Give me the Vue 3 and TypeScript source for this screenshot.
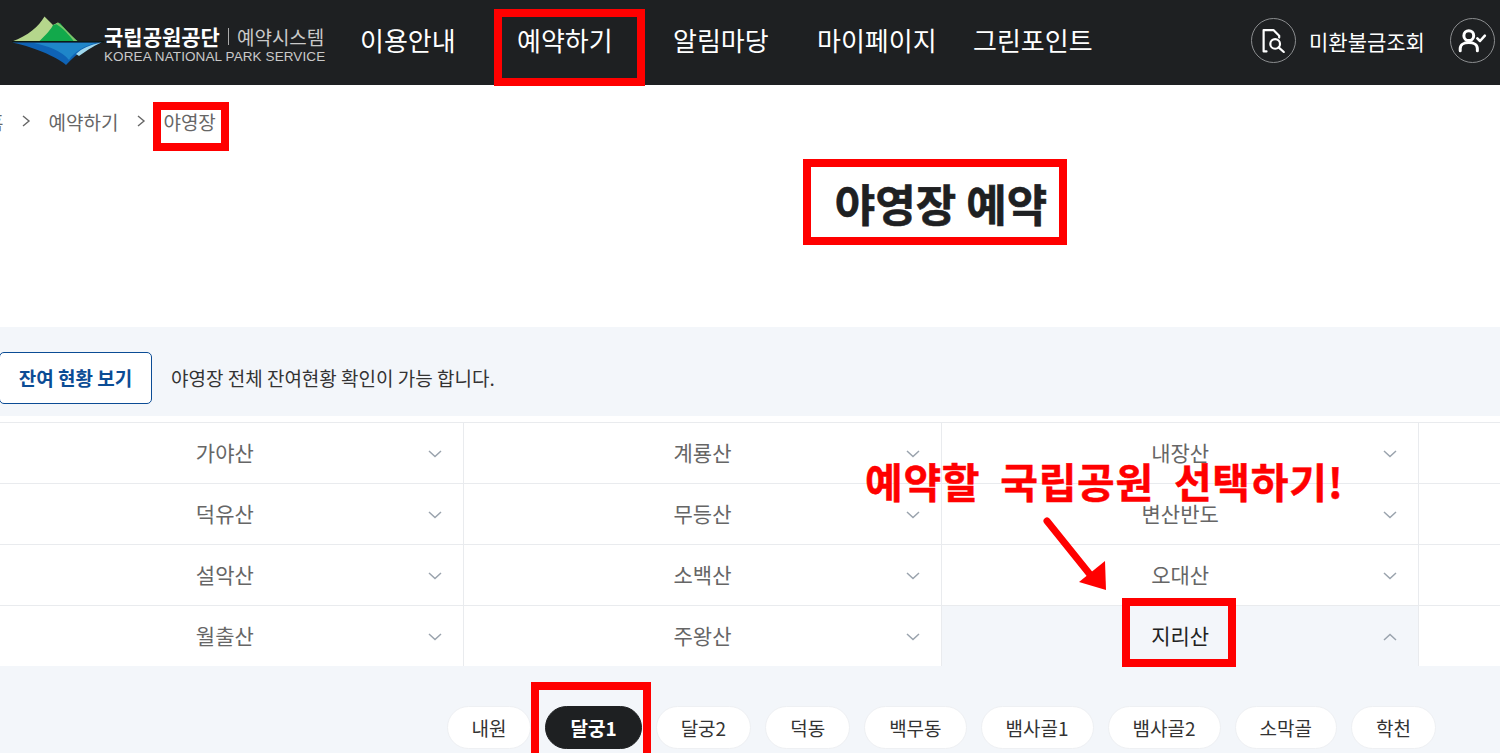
<script setup lang="ts">
const navItems: string[] = ['이용안내', '예약하기', '알림마당', '마이페이지', '그린포인트']
const parks: string[] = [
  '가야산', '계룡산', '내장산', '',
  '덕유산', '무등산', '변산반도', '',
  '설악산', '소백산', '오대산', '',
  '월출산', '주왕산', '지리산', '',
]
const camps: string[] = ['내원', '달궁1', '달궁2', '덕동', '백무동', '뱀사골1', '뱀사골2', '소막골', '학천']
</script>

<template>
  <div class="page">
    <header class="header">
      <div class="logo">
        <svg class="logo-mark" width="92" height="52" viewBox="0 0 92 52">
          <path d="M0 26.5C16 21 27 11 32.5 1.500L41 10L46 7.500C53 14 60 22 66 26.500Z" fill="#b5d68c" />
          <path d="M27 26.5C34 20 40 13 41 10L48 8C54 15 60 22 66 26.500Z" fill="#12a94b" />
          <path d="M46 7.500C54 14 60 22 66 26.500H62C57 20 51 13 44 9Z" fill="#7cc36a" />
          <rect x="0" y="26" width="92" height="1.400" fill="#0c1a16" />
          <path d="M0 27.500H90C76 31 66 37 54 50C48 44 26 33 0 27.500Z" fill="#0f63b5" />
          <path d="M22 28H84C72 31 62 37 57 45C50 36 36 31 22 28Z" fill="#1f86c9" />
          <path d="M64 39C70 33 78 30 89 27.500C80 32 74 36 67 41Z" fill="#9fd8ee" />
        </svg>
        <div class="logo-text">
          <div class="logo-top">
            <span class="logo-org">국립공원공단</span>
            <span class="logo-sep"></span>
            <span class="logo-sys">예약시스템</span>
          </div>
          <div class="logo-en">KOREA NATIONAL PARK SERVICE</div>
        </div>
      </div>
      <nav class="nav">
        <a v-for="item in navItems" :key="item" class="nav-item">{{ item }}</a>
      </nav>
      <div class="utils">
        <span class="circle">
          <svg width="30" height="30" viewBox="0 0 26 26" fill="none" stroke="#fff" stroke-width="1.900" stroke-linecap="round" stroke-linejoin="round">
            <path d="M6.500 22H4V3.500H12.500L17.500 8.500V10" />
            <circle cx="14" cy="15.500" r="4.200" />
            <path d="M17 18.500L21.500 22.500" />
          </svg>
        </span>
        <span class="refund">미환불금조회</span>
        <span class="circle user">
          <svg width="30" height="28" viewBox="0 0 28 26" fill="none" stroke="#fff" stroke-width="2.800" stroke-linecap="round" stroke-linejoin="round">
            <circle cx="11" cy="8" r="4.600" />
            <path d="M3 22V20C3 16.500 6.500 14.500 11 14.500S19 16.500 19 20V22" />
            <path d="M19 10.500L21.500 13L26 8" stroke-width="2.400" />
          </svg>
        </span>
      </div>
    </header>

    <div class="breadcrumb">
      <span class="crumb">홈</span>
      <svg class="sep" width="10" height="14" viewBox="0 0 10 14" fill="none" stroke="#666" stroke-width="1.400"><path d="M2 2L8 7L2 12" /></svg>
      <span class="crumb">예약하기</span>
      <svg class="sep" width="10" height="14" viewBox="0 0 10 14" fill="none" stroke="#666" stroke-width="1.400"><path d="M2 2L8 7L2 12" /></svg>
      <span class="crumb">야영장</span>
    </div>

    <h1 class="title">야영장 예약</h1>

    <section class="status">
      <button class="status-btn">잔여 현황 보기</button>
      <p class="status-text">야영장 전체 잔여현황 확인이 가능 합니다.</p>
    </section>

    <div class="grid">
      <div
        v-for="(park, i) in parks"
        :key="i"
        class="cell"
        :class="{ active: park === '지리산' }"
      >
        <template v-if="park">
          <span class="cell-name">{{ park }}</span>
          <svg class="chev" width="14" height="8" viewBox="0 0 14 8" fill="none" stroke="#9aa3ad" stroke-width="1.500">
            <path v-if="park === '지리산'" d="M1 7L7 1.500L13 7" />
            <path v-else d="M1 1L7 6.500L13 1" />
          </svg>
        </template>
      </div>
    </div>

    <section class="camps">
      <span v-for="c in camps" :key="c" class="pill" :class="{ on: c === '달궁1' }">{{ c }}</span>
    </section>

    <div class="mark m-nav"></div>
    <div class="mark m-crumb"></div>
    <div class="mark m-title"></div>
    <div class="mark m-park"></div>
    <div class="mark m-camp"></div>
    <div class="callout">예약할 국립공원 선택하기!</div>
    <svg class="arrow" width="70" height="80" viewBox="0 0 70 80">
      <path d="M4 4L49 60" stroke="#f00" stroke-width="7" stroke-linecap="round" fill="none" />
      <path d="M36 65L63 73L62 44Z" fill="#f00" />
    </svg>
  </div>
</template>

<style>
html, body { margin: 0; background: #fff; }
</style>

<style scoped>
.page {
  position: relative;
  width: 1500px;
  height: 753px;
  overflow: hidden;
  background: #fff;
  font-family: "Noto Sans CJK KR", "Noto Sans", sans-serif;
  color: #222;
}
.header {
  display: flex;
  align-items: center;
  height: 85px;
  background: #1e2022;
  color: #fff;
  padding-left: 12px;
}
.logo { display: flex; align-items: center; width: 348px; flex: none; }
.logo-mark { flex: none; margin-top: -3px; }
.logo-text { display: flex; flex-direction: column; margin-top: 3px; }
.logo-top { display: flex; align-items: center; height: 26px; }
.logo-org { font-size: 21px; font-weight: 700; letter-spacing: 0; color: #fff; }
.logo-sep { width: 1px; height: 17px; background: #aaa; margin: 0 8px; }
.logo-sys { font-size: 19px; letter-spacing: 0; color: #c9c9c9; }
.logo-en {
  font-family: "Liberation Sans", sans-serif;
  font-size: 13.500px;
  letter-spacing: 0.100px;
  line-height: 16px;
  color: #c9c9c9;
  white-space: nowrap;
}
.nav {
  display: grid;
  grid-template-columns: 157px 156px 144px 156px auto;
  font-size: 26px;
  width: 880px;
  flex: none;
  margin-top: -6px;
}
.nav-item { white-space: nowrap; }
.utils { display: flex; align-items: center; margin: -4px 0 0 11px; flex: none; }
.circle {
  display: flex;
  align-items: center;
  justify-content: center;
  width: 43px;
  height: 43px;
  border: 1px solid #8b8d8f;
  border-radius: 50%;
  flex: none;
}
.refund { font-size: 21px; margin: 0 25px 0 13px; white-space: nowrap; }
.breadcrumb {
  display: flex;
  align-items: center;
  height: 72px;
  margin-left: -14px;
  font-size: 19px;
  color: #666;
}
.sep { margin: 0 17.500px; }
.crumb { white-space: nowrap; }
.title {
  margin: 0;
  height: 170px;
  padding: 20px 0 0 382px;
  box-sizing: border-box;
  text-align: center;
  font-size: 44px;
  line-height: 52px;
  font-weight: 700;
  -webkit-text-stroke: 0.600px #1e2022;
  color: #1e2022;
}
.status {
  display: flex;
  align-items: center;
  height: 89px;
  padding-top: 12px;
  box-sizing: border-box;
  background: #f3f6fa;
}
.status-btn {
  width: 153px;
  height: 52px;
  margin-left: -1px;
  background: #fff;
  border: 1px solid #0b4c95;
  border-radius: 5px;
  font-family: inherit;
  font-size: 19px;
  font-weight: 700;
  color: #0b4c95;
  padding: 0;
}
.status-text { margin: 0 0 0 19px; font-size: 19px; color: #333; }
.grid {
  display: grid;
  grid-template-columns: repeat(4, 477.670px);
  margin: 6px 0 0 -13.500px;
  border-top: 1px solid #e9ebee;
}
.cell {
  position: relative;
  display: flex;
  align-items: center;
  justify-content: center;
  height: 60px;
  border-right: 1px solid #e9ebee;
  border-bottom: 1px solid #e9ebee;
  font-size: 21px;
  color: #666;
}
.cell:nth-last-child(-n+4) { border-bottom: 0; }
.cell.active { background: #f3f6fa; color: #222; }
.cell-name { margin-top: -3px; }
.chev { position: absolute; right: 21px; top: 27px; }
.camps {
  display: flex;
  justify-content: flex-end;
  gap: 14px;
  height: 87px;
  box-sizing: border-box;
  padding: 40px 64px 0 0;
  background: #f3f6fa;
}
.pill {
  display: flex;
  align-items: center;
  justify-content: center;
  height: 43px;
  padding: 0 24px;
  background: #fff;
  border: 1px solid #eef0f3;
  box-sizing: border-box;
  border-radius: 22px;
  font-size: 19px;
  color: #333;
}
.pill.on { background: #1e2022; border-color: #1e2022; color: #fff; font-weight: 700; }
.mark { position: absolute; border: 8px solid #f00; box-sizing: border-box; }
.m-nav { left: 494px; top: 9px; width: 151px; height: 77px; }
.m-crumb { left: 153px; top: 102px; width: 76px; height: 49px; }
.m-title { left: 803px; top: 159px; width: 264px; height: 86px; }
.m-park { left: 1122px; top: 598px; width: 114px; height: 69px; }
.m-camp { left: 531px; top: 682px; width: 120px; height: 71px; border-bottom-width: 0; }
.callout {
  position: absolute;
  left: 865px;
  top: 452px;
  color: #f00;
  font-size: 41px;
  line-height: 56px;
  font-weight: 700;
  -webkit-text-stroke: 0.500px #f00;
  letter-spacing: 0.700px;
  word-spacing: 10px;
  white-space: nowrap;
}
.arrow { position: absolute; left: 1043px; top: 517px; }
</style>
